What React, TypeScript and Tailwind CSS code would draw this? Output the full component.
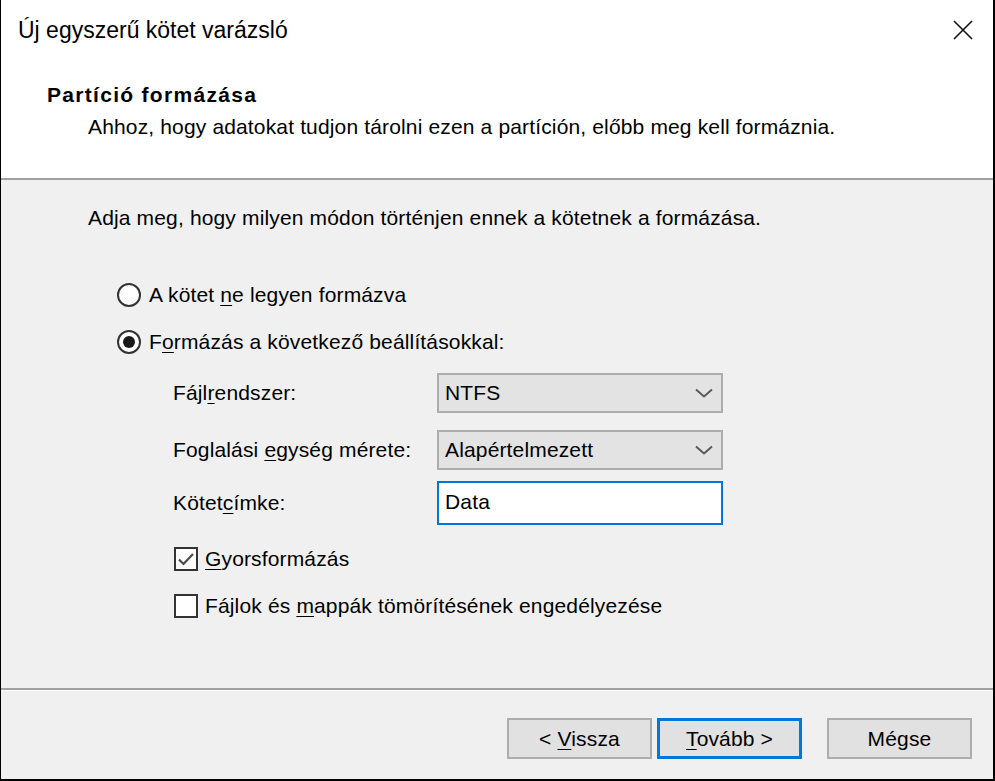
import React from 'react';

const font = { fontFamily: '"Liberation Sans", Arial, sans-serif' };

const U = ({ children }: { children: React.ReactNode }) => (
    <span className="underline decoration-1 underline-offset-[3px]">{children}</span>
);

const Chevron = () => (
    <svg width="18" height="10" viewBox="0 0 18 10" className="shrink-0">
        <path d="M1 1.5 L9 8.5 L17 1.5" fill="none" stroke="#5a5a5a" strokeWidth="2" />
    </svg>
);

const Radio = ({ checked }: { checked?: boolean }) => (
    <div className="w-[24px] h-[24px] rounded-full border-2 border-[#333333] bg-white flex items-center justify-center shrink-0">
        {checked && <div className="w-[12px] h-[12px] rounded-full bg-[#1a1a1a]" />}
    </div>
);

const Checkbox = ({ checked }: { checked?: boolean }) => (
    <div className="w-[24px] h-[24px] border-2 border-[#333333] bg-white flex items-center justify-center shrink-0">
        {checked && (
            <svg width="18" height="14" viewBox="0 0 18 14">
                <path d="M2 7.5 L6.5 12 L16 2" fill="none" stroke="#4a4a4a" strokeWidth="2.2" />
            </svg>
        )}
    </div>
);

const Combo = ({ value }: { value: string }) => (
    <div className="w-[286px] h-[40px] bg-[#e3e3e3] border-2 border-[#adadad] flex items-center justify-between pl-[6px] pr-[8px]">
        <span>{value}</span>
        <Chevron />
    </div>
);

export default function App() {
    return (
        <div
            className="w-[995px] h-[781px] flex flex-col bg-white border-l border-r-2 border-b-2 border-black text-[21px] tracking-[0.15px] text-black overflow-hidden"
            style={font}
        >
            {/* 제목 표시줄 */}
            <div className="h-[60px] shrink-0 flex items-center justify-between pl-[17px] pr-[20px]">
                <span className="text-[23px] tracking-normal">Új egyszerű kötet varázsló</span>
                <svg width="20" height="20" viewBox="0 0 20 20">
                    <path d="M1 1 L19 19 M19 1 L1 19" stroke="#111" strokeWidth="1.6" />
                </svg>
            </div>

            {/* 헤더 */}
            <div className="h-[118px] shrink-0 pt-[19px] leading-[32px]">
                <div className="pl-[46px] font-bold tracking-[1.3px]">Partíció formázása</div>
                <div className="pl-[87px]">Ahhoz, hogy adatokat tudjon tárolni ezen a partíción, előbb meg kell formáznia.</div>
            </div>
            <div className="h-[2px] shrink-0 bg-[#a0a0a0]" />

            {/* 본문 */}
            <div className="flex-1 bg-[#f0f0f0] pl-[87px] pt-[22px] flex flex-col">
                <div className="leading-[32px]">Adja meg, hogy milyen módon történjen ennek a kötetnek a formázása.</div>

                <div className="mt-[45px] ml-[29px] h-[32px] flex items-center gap-[8px]">
                    <Radio />
                    <span>A kötet <U>n</U>e legyen formázva</span>
                </div>
                <div className="mt-[15px] ml-[29px] h-[32px] flex items-center gap-[8px]">
                    <Radio checked />
                    <span>F<U>o</U>rmázás a következő beállításokkal:</span>
                </div>

                <div className="ml-[85px] flex flex-col">
                    <div className="mt-[15px] flex items-center">
                        <span className="w-[264px]">Fájl<U>r</U>endszer:</span>
                        <Combo value="NTFS" />
                    </div>
                    <div className="mt-[17px] flex items-center">
                        <span className="w-[264px]">Foglalási <U>e</U>gység mérete:</span>
                        <Combo value="Alapértelmezett" />
                    </div>
                    <div className="mt-[11px] flex items-center">
                        <span className="w-[264px]">Kötet<U>c</U>ímke:</span>
                        <div className="w-[286px] h-[44px] bg-white border-2 border-[#0078d7] flex items-start pt-[3px] pl-[6px]">
                            Data
                        </div>
                    </div>

                    <div className="mt-[18px] ml-[1px] h-[32px] flex items-center gap-[7px]">
                        <Checkbox checked />
                        <span><U>G</U>yorsformázás</span>
                    </div>
                    <div className="mt-[15px] ml-[1px] h-[32px] flex items-center gap-[7px]">
                        <Checkbox />
                        <span>Fájlok és <U>m</U>appák tömörítésének engedélyezése</span>
                    </div>
                </div>
            </div>

            {/* 하단 구분선 */}
            <div className="h-[2px] shrink-0 bg-[#a0a0a0]" />
            <div className="h-[1px] shrink-0 bg-white" />

            {/* 버튼 영역 */}
            <div className="h-[88px] shrink-0 bg-[#f0f0f0] flex items-start justify-end pt-[27px] pr-[21px]">
                <button className="w-[145px] h-[41px] bg-[#e1e1e1] border-2 border-[#adadad] flex items-center justify-center">
                    <span>&lt; <U>V</U>issza</span>
                </button>
                <button className="ml-[5px] w-[145px] h-[41px] bg-[#e1e1e1] border-[3px] border-[#0078d7] flex items-center justify-center">
                    <span><U>T</U>ovább &gt;</span>
                </button>
                <button className="ml-[25px] w-[145px] h-[41px] bg-[#e1e1e1] border-2 border-[#adadad] flex items-center justify-center">
                    <span>Mégse</span>
                </button>
            </div>
        </div>
    );
}
